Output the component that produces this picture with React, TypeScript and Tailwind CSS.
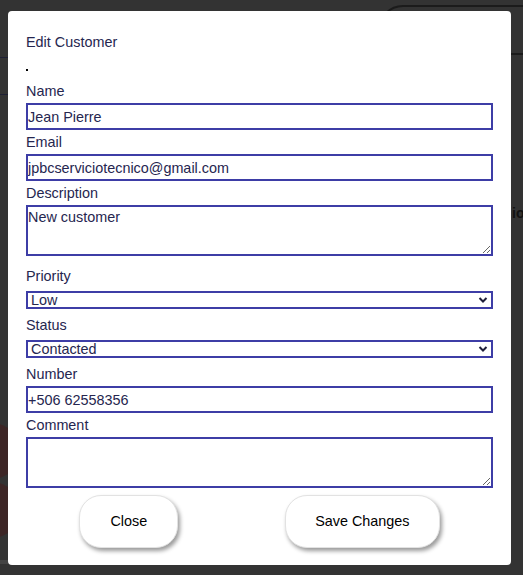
import React from 'react'

const labelCls = 'block h-[24px] leading-[24px] text-[14.4px] text-[#26264f]'
const fieldCls =
  'block w-full border-2 border-[#3d3da6] bg-white text-[14.4px] text-[#26264f] outline-none'

function Chevron() {
  return (
    <svg
      className="pointer-events-none absolute right-[5px] top-[5px]"
      width="10"
      height="8"
      viewBox="0 0 10 8"
      fill="none"
    >
      <path d="M1.5 2 L5 5.5 L8.5 2" stroke="#1f1f3a" strokeWidth="2" />
    </svg>
  )
}

function SelectField({ value, options, className }: { value: string; options: string[]; className: string }) {
  return (
    <div className={`relative ${className}`}>
      <select
        defaultValue={value}
        className={`${fieldCls} h-[18px] appearance-none pl-[3px] leading-[14px]`}
      >
        {options.map((o) => (
          <option key={o}>{o}</option>
        ))}
      </select>
      <Chevron />
    </div>
  )
}

export default function App() {
  return (
    <div className="relative flex h-[575px] w-full items-start overflow-hidden bg-[#333333] pl-[8px] pt-[11px] font-['Liberation_Sans',Arial,sans-serif]">
      {/* bits of the page behind the overlay */}
      <div className="absolute left-0 top-[57px] h-px w-[8px] bg-[#1e2035]" />
      <div className="absolute left-0 top-[94px] h-px w-[8px] bg-[#1e2035]" />
      <div className="absolute left-[378px] top-[5px] h-[50px] w-[180px] rounded-[25px] border-2 border-[#1b1b1b]" />
      <div className="absolute left-[-40px] top-[423px] h-[56px] w-[60px] rounded-full bg-[#3d2626]" />
      <div className="absolute left-[-40px] top-[482px] h-[56px] w-[60px] rounded-full bg-[#3d2626]" />
      <div className="absolute left-[512px] top-[203px] text-[14px] font-bold text-[#111]">io</div>
      <div className="absolute left-0 top-[560px] h-[4px] w-[8px] bg-[#444]" />

      {/* modal */}
      <div className="relative w-[503px] rounded-[4px] bg-white px-[18px] pb-[17px] pt-[21px]">
        <div className="h-[20px] leading-[20px] text-[14.4px] text-[#26264f]">Edit Customer</div>
        <div className="mt-[17px] h-[2px] w-[2px] bg-black" />
        <div className="mt-[8px]">
          <label className={labelCls}>Name</label>
          <input defaultValue="Jean Pierre" className={`${fieldCls} h-[27px] px-0`} />

          <label className={labelCls}>Email</label>
          <input defaultValue="jpbcserviciotecnico@gmail.com" className={`${fieldCls} h-[27px] px-0`} />

          <label className={labelCls}>Description</label>
          <textarea defaultValue="New customer" className={`${fieldCls} h-[51px] px-0 py-0`} />

          <label className={`${labelCls} mt-[8px]`}>Priority</label>
          <SelectField value="Low" options={['Low', 'Medium', 'High']} className="mb-[4px] mt-[3px]" />

          <label className={labelCls}>Status</label>
          <SelectField value="Contacted" options={['New', 'Contacted', 'Closed']} className="mb-[4px] mt-[3px]" />

          <label className={labelCls}>Number</label>
          <input defaultValue="+506 62558356" className={`${fieldCls} h-[27px] px-0`} />

          <label className={labelCls}>Comment</label>
          <textarea className={`${fieldCls} h-[51px] px-0 py-0`} />
        </div>

        <div className="mt-[7px] flex justify-around">
          <button className="h-[53px] rounded-[22px] border border-[#e2e2e2] bg-white px-[30px] text-[14.4px] text-black shadow-[2px_3px_4px_rgba(0,0,0,0.4)]">
            Close
          </button>
          <button className="h-[53px] rounded-[22px] border border-[#e2e2e2] bg-white px-[29px] text-[14.4px] text-black shadow-[2px_3px_4px_rgba(0,0,0,0.4)]">
            Save Changes
          </button>
        </div>
      </div>
    </div>
  )
}
